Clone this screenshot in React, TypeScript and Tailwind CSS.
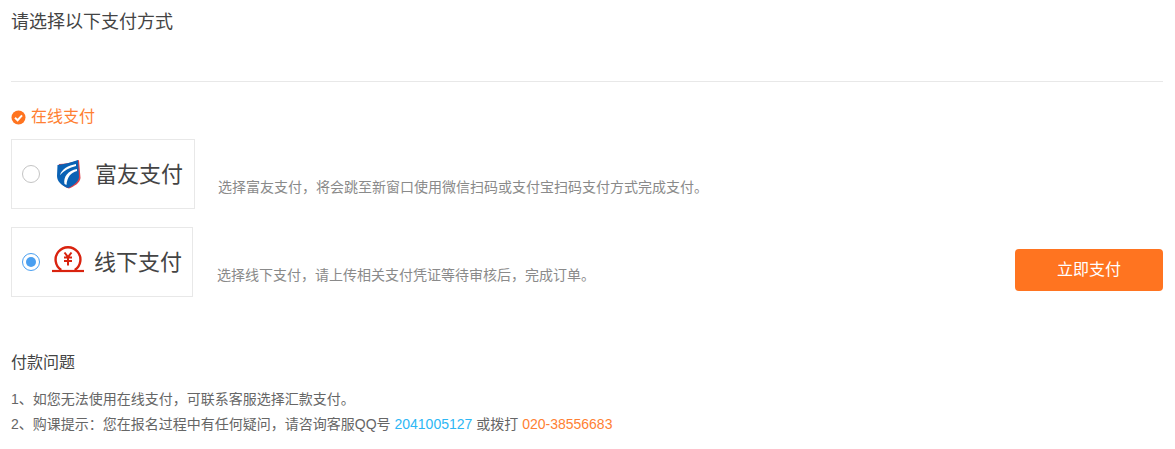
import React from "react";

function FuyouLogo() {
  return (
    <svg width="26" height="30" viewBox="0 0 26 30" className="shrink-0">
      <path d="M3 5 C9 5 16 3.5 23 1 L24.5 19 C24 24 18 27.5 13 29.5 C7 27.5 2 23 2 17 Z" fill="#d9434e" />
      <path d="M1.5 6 C8 5.5 15 3.5 22 1 L23 18 C22.5 23.5 16.5 27 12 29 C6 27 1 22.5 1 17 Z" fill="#0a62b5" />
      <path d="M4 16 C6 10 12 6.5 20 5 L20 7 C13 8.5 8 11.5 4 16 Z" fill="#ffffff" />
      <path d="M8.5 25 C7 18 12 11.5 21 10 L21 12 C15 13.5 11 18 10.5 26 Z" fill="#ffffff" />
    </svg>
  );
}

function OfflineLogo() {
  return (
    <svg width="32" height="32" viewBox="0 0 32 32" className="shrink-0">
      <path d="M9.25 24 A12.4 12.4 0 1 1 22.75 24" fill="none" stroke="#d9230f" strokeWidth="2.4" />
      <path d="M0 25 H32" stroke="#d9230f" strokeWidth="2.2" />
      <path d="M12.5 6.5 L16 11 L19.5 6.5 M12 11.5 H20 M12 15 H20 M16 11 V19.5" fill="none" stroke="#d9230f" strokeWidth="2" />
    </svg>
  );
}

export default function App() {
  return (
    <div className="w-[1175px] h-[449px] bg-white overflow-hidden pl-[11px] pr-[12px] font-['Liberation_Sans','Noto_Sans_CJK_SC',sans-serif] text-[#666666]">
      <h1 className="text-[18px] leading-[24px] pt-[10px] h-[71px] border-b border-[#e8e8e8] box-content font-normal text-[#444444]">
        请选择以下支付方式
      </h1>

      <div className="flex items-center gap-[5px] mt-[24px] h-[22px] text-[16px] text-[#ff7f33]">
        <svg width="15" height="15" viewBox="0 0 15 15" className="shrink-0">
          <circle cx="7.5" cy="7.5" r="7" fill="#ff7420" />
          <path d="M4 7.7 L6.6 10.2 L11 5.4" fill="none" stroke="#ffffff" strokeWidth="2" />
        </svg>
        <span>在线支付</span>
      </div>

      <div className="flex items-start mt-[11px]">
        <div className="flex items-center w-[184px] h-[70px] border border-[#e8e8e8] pl-[10px]">
          <span className="w-[18px] h-[18px] rounded-full border border-[#c4c4c4] shrink-0" />
          <span className="ml-[16px] flex"><FuyouLogo /></span>
          <span className="ml-[13px] text-[22px] text-[#444444] whitespace-nowrap">富友支付</span>
        </div>
        <p className="ml-[23px] mt-[38px] text-[14px] leading-[20px] text-[#8a8a8a]">
          选择富友支付，将会跳至新窗口使用微信扫码或支付宝扫码支付方式完成支付。
        </p>
      </div>

      <div className="flex items-start mt-[18px]">
        <div className="flex items-center w-[182px] h-[70px] border border-[#e8e8e8] pl-[10px]">
          <span className="flex items-center justify-center w-[18px] h-[18px] rounded-full border border-[#4a9ff0] shrink-0">
            <span className="w-[10px] h-[10px] rounded-full bg-[#4a9ff0]" />
          </span>
          <span className="ml-[12px] flex"><OfflineLogo /></span>
          <span className="ml-[10px] text-[22px] text-[#444444] whitespace-nowrap">线下支付</span>
        </div>
        <p className="ml-[24px] mt-[38px] text-[14px] leading-[20px] text-[#8a8a8a]">
          选择线下支付，请上传相关支付凭证等待审核后，完成订单。
        </p>
        <button className="ml-auto mt-[22px] w-[148px] h-[42px] rounded-[4px] bg-[#ff7420] text-white text-[16px]">
          立即支付
        </button>
      </div>

      <h2 className="mt-[54px] text-[16px] leading-[24px] font-normal text-[#444444]">付款问题</h2>
      <div className="mt-[12px] text-[14px] leading-[25px] text-[#666666]">
        <p>1、如您无法使用在线支付，可联系客服选择汇款支付。</p>
        <p>
          2、购课提示：您在报名过程中有任何疑问，请咨询客服QQ号{" "}
          <span className="text-[#2db7f5]">2041005127</span> 或拨打{" "}
          <span className="text-[#ff7f33]">020-38556683</span>
        </p>
      </div>
    </div>
  );
}
